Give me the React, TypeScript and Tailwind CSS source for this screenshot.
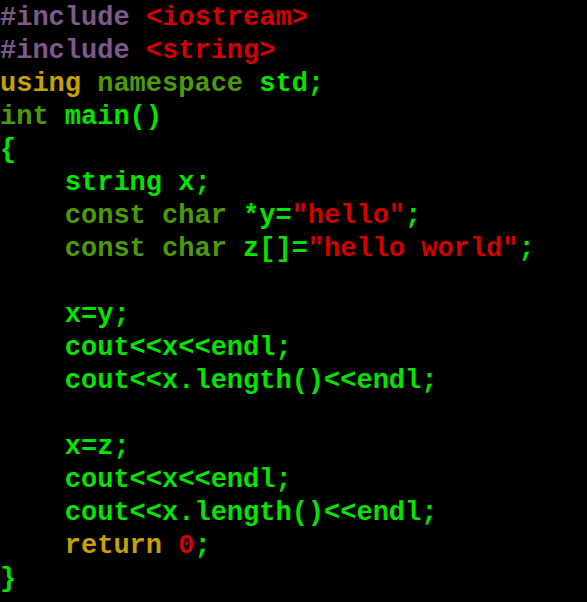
const P = "text-[#7e5a8a]"
const R = "text-[#d40000]"
const Y = "text-[#c8a000]"
const G = "text-[#4e9a06]"
const B = "text-[#00e400]"

type Seg = [string, string]

const lines: Seg[][] = [
  [["#include ", P], ["<iostream>", R]],
  [["#include ", P], ["<string>", R]],
  [["using ", Y], ["namespace ", G], ["std;", B]],
  [["int ", G], ["main()", B]],
  [["{", B]],
  [["    string x;", B]],
  [["    const char ", G], ["*y=", B], ['"hello"', R], [";", B]],
  [["    const char ", G], ["z[]=", B], ['"hello world"', R], [";", B]],
  [["", B]],
  [["    x=y;", B]],
  [["    cout<<x<<endl;", B]],
  [["    cout<<x.length()<<endl;", B]],
  [["", B]],
  [["    x=z;", B]],
  [["    cout<<x<<endl;", B]],
  [["    cout<<x.length()<<endl;", B]],
  [["    return ", Y], ["0", R], [";", B]],
  [["}", B]],
]

export default function App() {
  return (
    <div className="w-[587px] h-[602px] bg-black overflow-hidden pt-[2px] font-['Courier_New','Nimbus_Mono_PS','FreeMono','Liberation_Mono',monospace] font-bold text-[27px] leading-[33px] whitespace-pre">
      {lines.map((segs, i) => (
        <div key={i} className="h-[33px]">
          {segs.map(([t, c], j) => (
            <span key={j} className={c}>{t}</span>
          ))}
        </div>
      ))}
    </div>
  )
}
